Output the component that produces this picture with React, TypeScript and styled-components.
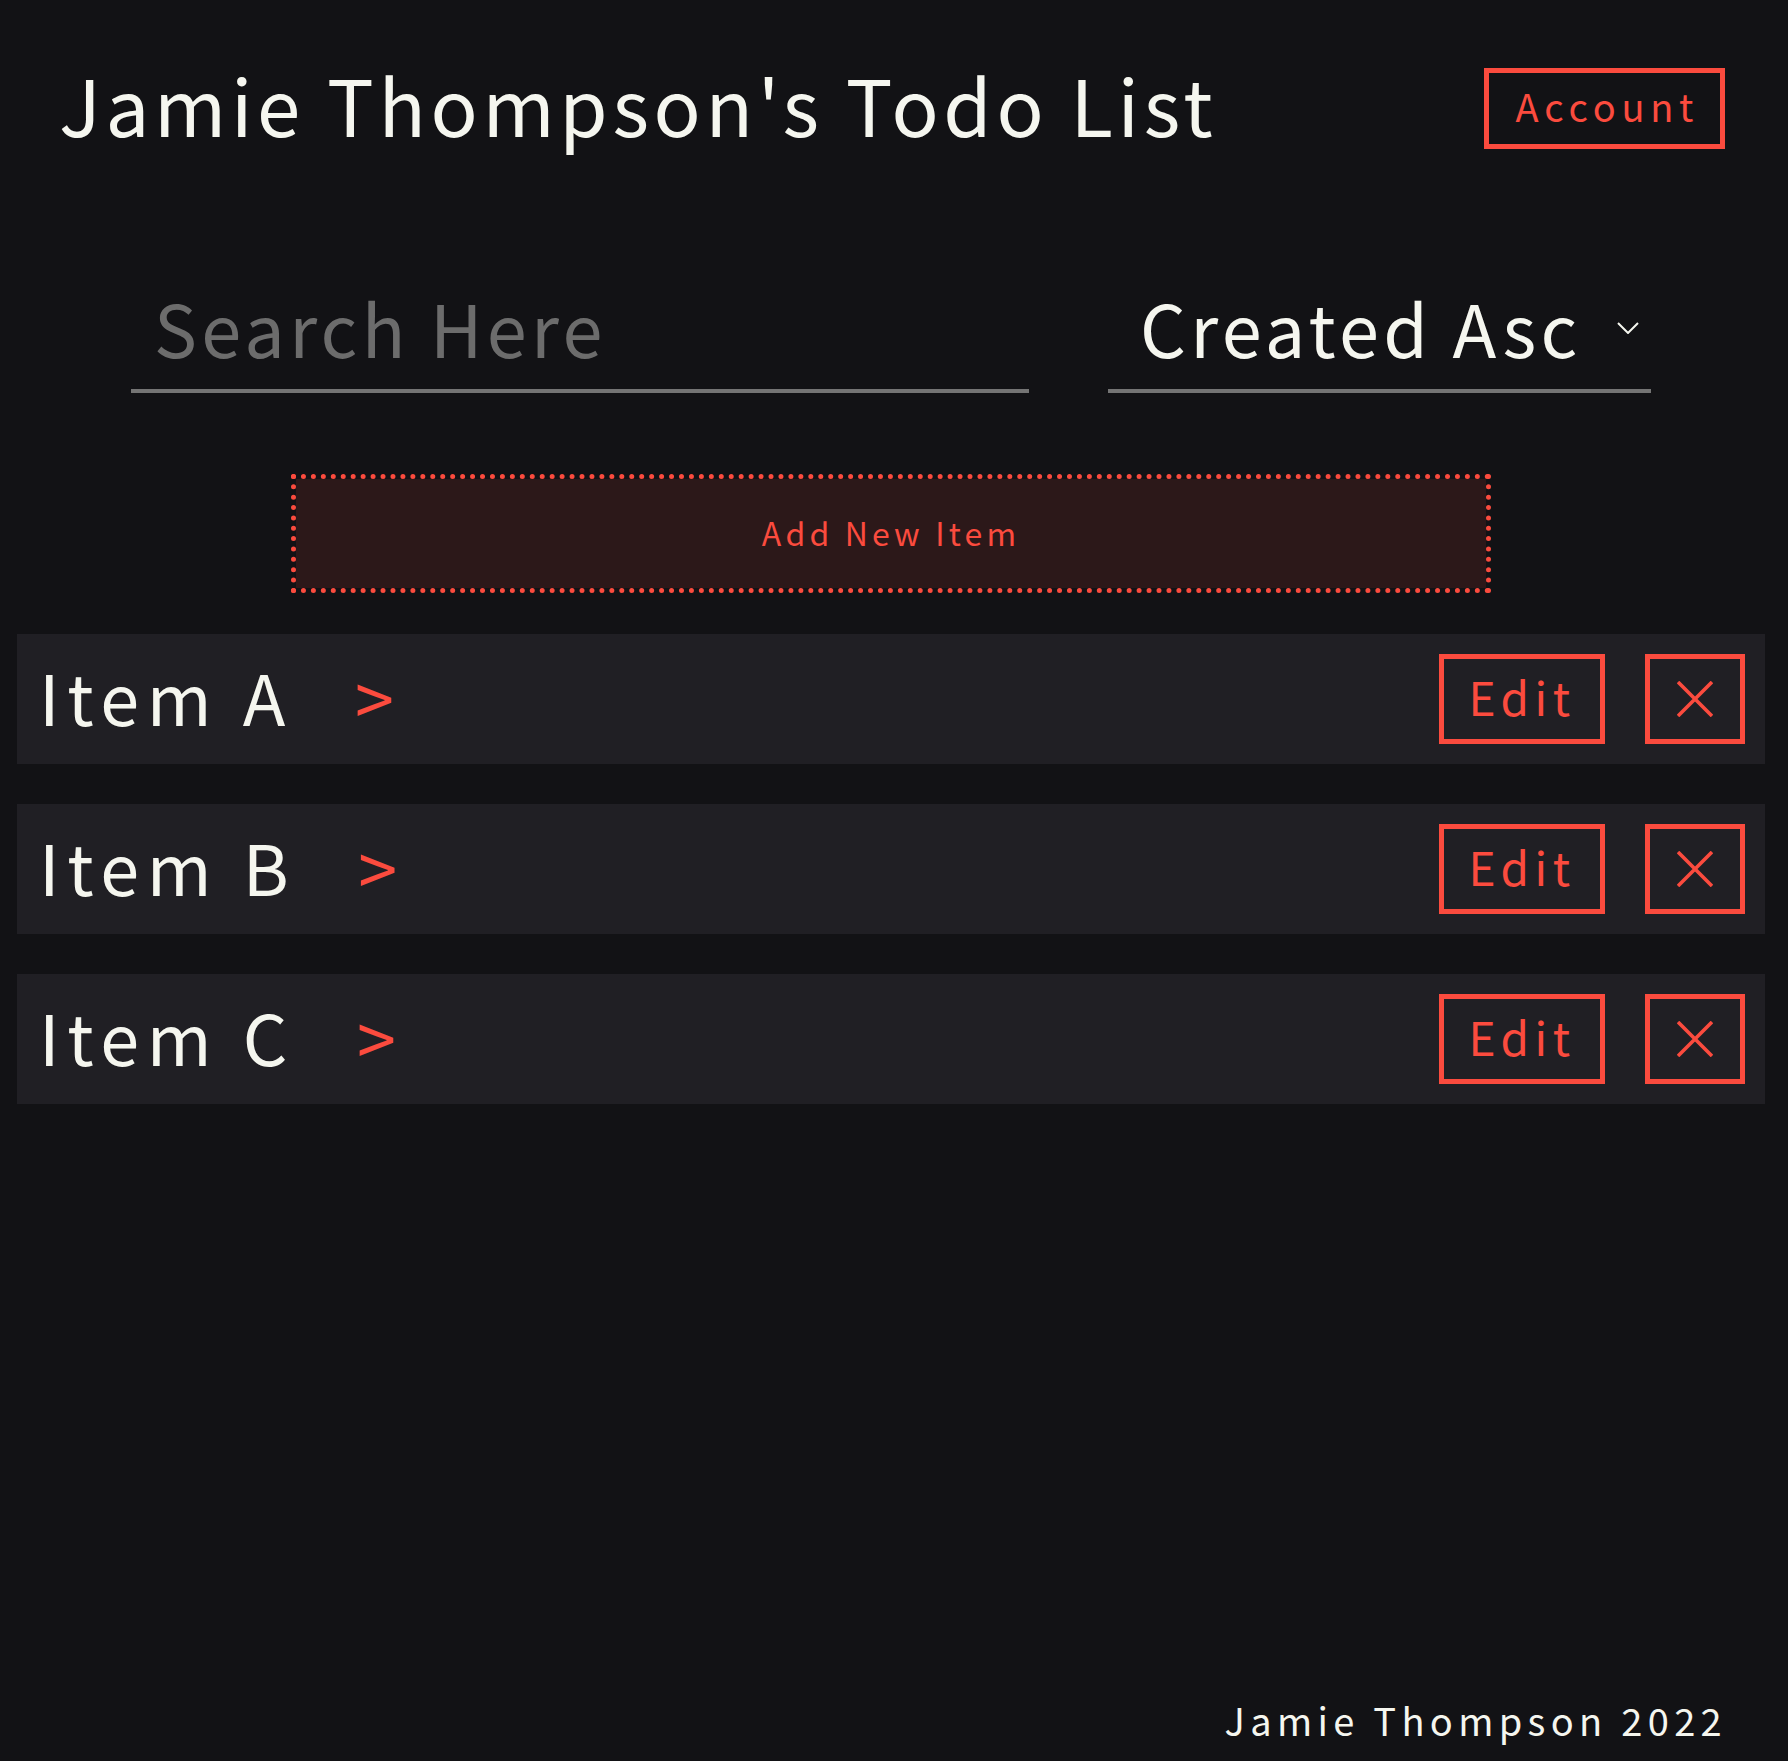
import styled, { createGlobalStyle } from 'styled-components';

const RED = '#fb4b3e';
const WHITE = '#f5f6ef';
const FONT = `"Noto Sans CJK SC", "Noto Sans", sans-serif`;

const GlobalStyle = createGlobalStyle`
  html, body {
    margin: 0;
    padding: 0;
    background-color: #121215;
  }

  body {
    font-family: ${FONT};
    color: ${WHITE};
  }

  * {
    box-sizing: border-box;
  }
`;

const items = [
  { id: 1, title: 'Item A' },
  { id: 2, title: 'Item B' },
  { id: 3, title: 'Item C' },
];

const CloseIcon = () => (
  <svg width='36' height='36' viewBox='0 0 36 36'>
    <path d='M1 1 L35 35 M35 1 L1 35' stroke={RED} strokeWidth='3.6' fill='none' />
  </svg>
);

const ChevronDown = () => (
  <svg width='22' height='12' viewBox='0 0 22 12'>
    <path d='M1 1 L11 11 L21 1' stroke={WHITE} strokeWidth='2' fill='none' />
  </svg>
);

const App = () => {
  return (
    <>
      <GlobalStyle />
      <Page>
        <Header>
          <Title>Jamie Thompson's Todo List</Title>
          <OutlineButton>Account</OutlineButton>
        </Header>

        <Controls>
          <SearchInput placeholder='Search Here' />
          <SortSelect>
            <span>Created Asc</span>
            <ChevronDown />
          </SortSelect>
        </Controls>

        <AddButton>Add New Item</AddButton>

        <List>
          {items.map((el) => (
            <Row key={el.id}>
              <ItemTitle>{el.title}</ItemTitle>
              <Arrow>&gt;</Arrow>
              <RowActions>
                <RowButton $width={166}>Edit</RowButton>
                <RowButton $width={100}>
                  <CloseIcon />
                </RowButton>
              </RowActions>
            </Row>
          ))}
        </List>

        <Footer>Jamie Thompson 2022</Footer>
      </Page>
    </>
  );
};

export default App;

const Page = styled.div`
  display: flex;
  flex-direction: column;
  min-height: 100vh;
  width: 1748px;
  margin-left: 17px;
`;

const Header = styled.header`
  display: flex;
  justify-content: space-between;
  align-items: center;
  height: 81px;
  margin-top: 68px;
  padding: 0 40px 0 42px;
`;

const Title = styled.h1`
  margin: 0 0 12px;
  font-size: 78px;
  font-weight: 400;
  letter-spacing: 0.06em;
  line-height: 1;
`;

const OutlineButton = styled.button`
  height: 81px;
  width: 241px;
  padding: 0 0 6px 0.15em;
  border: 5px solid ${RED};
  background: transparent;
  color: ${RED};
  font-family: ${FONT};
  font-size: 38px;
  letter-spacing: 0.15em;
`;

const Controls = styled.div`
  display: flex;
  gap: 79px;
  margin-top: 124px;
  padding: 0 114px;
`;

const SearchInput = styled.input`
  width: 898px;
  height: 120px;
  padding: 0 0 10px 23px;
  border: none;
  border-bottom: 4px solid #747474;
  background: transparent;
  color: ${WHITE};
  font-family: ${FONT};
  font-size: 72px;
  letter-spacing: 0.06em;
  outline: none;

  &::placeholder {
    color: #6c6c6c;
  }
`;

const SortSelect = styled.div`
  display: flex;
  align-items: center;
  justify-content: space-between;
  width: 543px;
  height: 120px;
  padding: 0 12px 10px 32px;
  border-bottom: 4px solid #747474;
  font-size: 72px;
  letter-spacing: 0.06em;

  svg {
    margin-top: 4px;
  }
`;

const AddButton = styled.button`
  width: 1200px;
  height: 119px;
  margin: 81px auto 0;
  padding: 0 0 4px;
  border: 5px dotted ${RED};
  background-color: #2c1819;
  background-clip: padding-box;
  color: ${RED};
  font-family: ${FONT};
  font-size: 32px;
  letter-spacing: 0.13em;
`;

const List = styled.ul`
  display: flex;
  flex-direction: column;
  gap: 40px;
  margin: 41px 0 0;
  padding: 0;
  list-style: none;
`;

const Row = styled.li`
  display: flex;
  align-items: center;
  height: 130px;
  padding: 0 20px 8px 22px;
  background-color: #201f24;
`;

const ItemTitle = styled.span`
  font-size: 70px;
  letter-spacing: 0.11em;
`;

const Arrow = styled.span`
  margin-left: 62px;
  color: ${RED};
  font-size: 70px;
`;

const RowActions = styled.div`
  display: flex;
  gap: 40px;
  margin: 8px 0 0 auto;
`;

const RowButton = styled.button<{ $width: number }>`
  display: flex;
  justify-content: center;
  align-items: center;
  width: ${({ $width }) => $width}px;
  height: 90px;
  padding: 0 0 6px;
  border: 5px solid ${RED};
  background: transparent;
  color: ${RED};
  font-family: ${FONT};
  font-size: 46px;
  letter-spacing: 0.12em;

  svg {
    margin-top: 6px;
  }
`;

const Footer = styled.footer`
  margin-top: auto;
  padding: 0 38px 14px 0;
  text-align: right;
  font-size: 38px;
  letter-spacing: 0.14em;
`;
